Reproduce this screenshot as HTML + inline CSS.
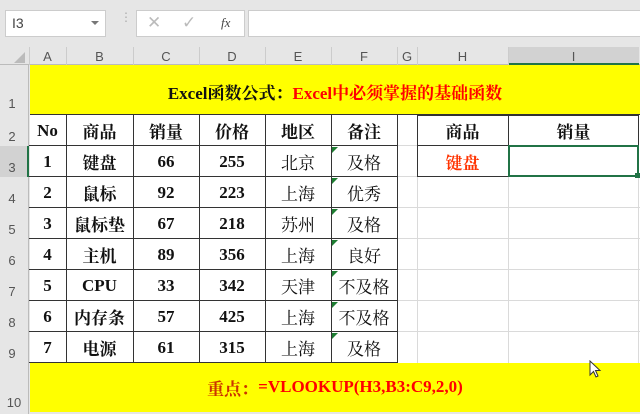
<!DOCTYPE html>
<html><head><meta charset="utf-8"><style>
*{margin:0;padding:0;box-sizing:border-box}
body{width:640px;height:414px;background:#e6e6e6;position:relative;overflow:hidden;font-family:"Liberation Serif","Noto Serif CJK SC",serif}
.a{position:absolute}
.hd{position:absolute;font-family:"Liberation Sans",sans-serif;font-size:13px;color:#555;text-align:center}
.c{position:absolute;display:flex;align-items:center;justify-content:center;font-size:17px;font-weight:bold;color:#111}
.n{font-weight:normal}
.tri{position:absolute;width:0;height:0;border-top:6px solid #1e7d32;border-right:6px solid transparent}
</style></head><body>
<!-- toolbar -->
<div class="a" style="left:0;top:0;width:640px;height:44px;background:#e6e6e6"></div>
<div class="a" style="left:5px;top:10px;width:101px;height:27px;background:#fff;border:1px solid #ccc"></div>
<div class="hd" style="left:12px;top:15px;font-size:14px;color:#444">I3</div>
<div class="a" style="left:91px;top:21px;border-left:4px solid transparent;border-right:4px solid transparent;border-top:4px solid #777"></div>
<div class="a" style="left:120px;top:15px;color:#aaa;font-size:12px;line-height:5px">⋮</div>
<div class="a" style="left:136px;top:10px;width:109px;height:27px;background:#fff;border:1px solid #ccc"></div>
<div class="a" style="left:147px;top:13px;color:#bbb;font-size:17px;font-family:'DejaVu Sans'">✕</div>
<div class="a" style="left:182px;top:13px;color:#bbb;font-size:17px;font-family:'DejaVu Sans'">✓</div>
<div class="a" style="left:221px;top:15px;color:#444;font-size:13px;font-style:italic">fx</div>
<div class="a" style="left:248px;top:10px;width:392px;height:27px;background:#fff;border-top:1px solid #ccc;border-bottom:1px solid #ccc;border-left:1px solid #ccc"></div>
<!-- column header -->
<div class="a" style="left:0;top:47px;width:640px;height:18px;background:#e6e6e6;border-bottom:1px solid #bbb"></div>
<div class="a" style="left:508px;top:47px;width:131px;height:18px;background:#d2d2d2;border-bottom:2px solid #217346"></div>
<div class="a" style="left:14px;top:52px;border-left:11px solid transparent;border-bottom:11px solid #bbb"></div>
<div class="a" style="left:0;top:65px;width:29px;height:349px;background:#e6e6e6;border-right:1px solid #bbb"></div>
<div class="a" style="left:0;top:146px;width:29px;height:31px;background:#d2d2d2;border-right:2px solid #217346"></div>
<!-- col letters -->
<div class="hd" style="left:29px;top:49px;width:37px">A</div>
<div class="hd" style="left:66px;top:49px;width:67px">B</div>
<div class="hd" style="left:133px;top:49px;width:66px">C</div>
<div class="hd" style="left:199px;top:49px;width:66px">D</div>
<div class="hd" style="left:265px;top:49px;width:66px">E</div>
<div class="hd" style="left:331px;top:49px;width:66px">F</div>
<div class="hd" style="left:397px;top:49px;width:20px">G</div>
<div class="hd" style="left:417px;top:49px;width:91px">H</div>
<div class="hd" style="left:508px;top:49px;width:131px">I</div>
<div class="a" style="left:29px;top:47px;width:1px;height:18px;background:#ccc"></div>
<div class="a" style="left:66px;top:47px;width:1px;height:18px;background:#ccc"></div>
<div class="a" style="left:133px;top:47px;width:1px;height:18px;background:#ccc"></div>
<div class="a" style="left:199px;top:47px;width:1px;height:18px;background:#ccc"></div>
<div class="a" style="left:265px;top:47px;width:1px;height:18px;background:#ccc"></div>
<div class="a" style="left:331px;top:47px;width:1px;height:18px;background:#ccc"></div>
<div class="a" style="left:397px;top:47px;width:1px;height:18px;background:#ccc"></div>
<div class="a" style="left:417px;top:47px;width:1px;height:18px;background:#ccc"></div>
<div class="a" style="left:508px;top:47px;width:1px;height:18px;background:#ccc"></div>
<!-- row numbers -->
<div class="hd" style="left:0;top:96px;width:24px">1</div>
<div class="hd" style="left:0;top:129px;width:24px">2</div>
<div class="hd" style="left:0;top:160px;width:24px">3</div>
<div class="hd" style="left:0;top:191px;width:24px">4</div>
<div class="hd" style="left:0;top:222px;width:24px">5</div>
<div class="hd" style="left:0;top:253px;width:24px">6</div>
<div class="hd" style="left:0;top:284px;width:24px">7</div>
<div class="hd" style="left:0;top:315px;width:24px">8</div>
<div class="hd" style="left:0;top:346px;width:24px">9</div>
<div class="hd" style="left:0;top:395px;width:28px">10</div>
<!-- grid area -->
<div class="a" style="left:30px;top:115px;width:610px;height:248px;background:#fff"></div>
<svg class="a" style="left:0;top:0" width="640" height="414">
<g stroke="#dadada" stroke-width="1">
<line x1="508.5" y1="115" x2="508.5" y2="363"/><line x1="638.5" y1="115" x2="638.5" y2="363"/><line x1="417.5" y1="115" x2="417.5" y2="363"/>
<line x1="397" y1="207.5" x2="640" y2="207.5"/><line x1="397" y1="238.5" x2="640" y2="238.5"/><line x1="397" y1="269.5" x2="640" y2="269.5"/><line x1="397" y1="300.5" x2="640" y2="300.5"/><line x1="397" y1="331.5" x2="640" y2="331.5"/><line x1="397" y1="176.5" x2="417" y2="176.5"/><line x1="397" y1="145.5" x2="417" y2="145.5"/>
</g>
<g stroke="#333" stroke-width="1">
<line x1="29" y1="145.5" x2="397" y2="145.5"/><line x1="29" y1="176.5" x2="397" y2="176.5"/><line x1="29" y1="207.5" x2="397" y2="207.5"/><line x1="29" y1="238.5" x2="397" y2="238.5"/><line x1="29" y1="269.5" x2="397" y2="269.5"/><line x1="29" y1="300.5" x2="397" y2="300.5"/><line x1="29" y1="331.5" x2="397" y2="331.5"/><line x1="29" y1="362.5" x2="397" y2="362.5"/>
<line x1="66.5" y1="115" x2="66.5" y2="363"/><line x1="133.5" y1="115" x2="133.5" y2="363"/><line x1="199.5" y1="115" x2="199.5" y2="363"/><line x1="265.5" y1="115" x2="265.5" y2="363"/><line x1="331.5" y1="115" x2="331.5" y2="363"/><line x1="397.5" y1="115" x2="397.5" y2="363"/>
<line x1="417.5" y1="115" x2="417.5" y2="177"/><line x1="508.5" y1="115" x2="508.5" y2="177"/><line x1="638.5" y1="115" x2="638.5" y2="177"/>
<line x1="417" y1="115.5" x2="639" y2="115.5"/><line x1="417" y1="145.5" x2="639" y2="145.5"/><line x1="417" y1="176.5" x2="639" y2="176.5"/>
</g>
<rect x="509" y="146" width="129" height="30" fill="none" stroke="#217346" stroke-width="2"/>
<rect x="635" y="173" width="5" height="5" fill="#217346"/>
</svg>
<!-- yellow rows -->
<div class="a" style="left:30px;top:65px;width:610px;height:50px;background:#ffff00;border-bottom:1px solid #333"></div>
<div class="a" style="left:30px;top:363px;width:610px;height:49px;background:#ffff00"></div>
<div class="c" style="left:30px;top:76px;width:610px;height:30px;font-size:17px">Excel函数公式：<span style="color:#f00">Excel中必须掌握的基础函数</span></div>
<div class="c" style="left:30px;top:372px;width:610px;height:30px;font-size:17px;color:#cc3300">重点：<span style="color:#f00">=VLOOKUP(H3,B3:C9,2,0)</span></div>
<!-- mouse -->
<svg class="a" style="left:589px;top:360px" width="14" height="20"><path d="M1 1 L1 15 L4.5 11.5 L7 17 L9 16 L6.5 10.5 L11 10.5 Z" fill="#fff" stroke="#333" stroke-width="1"/></svg>
<!-- header row -->
<div class="c" style="left:29px;top:115px;width:37px;height:31px">No</div>
<div class="c" style="left:66px;top:115px;width:67px;height:31px">商品</div>
<div class="c" style="left:133px;top:115px;width:66px;height:31px">销量</div>
<div class="c" style="left:199px;top:115px;width:66px;height:31px">价格</div>
<div class="c" style="left:265px;top:115px;width:66px;height:31px">地区</div>
<div class="c" style="left:331px;top:115px;width:66px;height:31px">备注</div>
<div class="c" style="left:417px;top:115px;width:91px;height:31px">商品</div>
<div class="c" style="left:508px;top:115px;width:131px;height:31px">销量</div>
<div class="c" style="left:417px;top:146px;width:91px;height:31px;color:#ff3300">键盘</div>
<!-- data -->
<div class="c" style="left:29px;top:146px;width:37px;height:31px">1</div><div class="c" style="left:66px;top:146px;width:67px;height:31px">键盘</div><div class="c" style="left:133px;top:146px;width:66px;height:31px">66</div><div class="c" style="left:199px;top:146px;width:66px;height:31px">255</div><div class="c n" style="left:265px;top:146px;width:66px;height:31px">北京</div><div class="c n" style="left:331px;top:146px;width:66px;height:31px">及格</div>
<div class="c" style="left:29px;top:177px;width:37px;height:31px">2</div><div class="c" style="left:66px;top:177px;width:67px;height:31px">鼠标</div><div class="c" style="left:133px;top:177px;width:66px;height:31px">92</div><div class="c" style="left:199px;top:177px;width:66px;height:31px">223</div><div class="c n" style="left:265px;top:177px;width:66px;height:31px">上海</div><div class="c n" style="left:331px;top:177px;width:66px;height:31px">优秀</div>
<div class="c" style="left:29px;top:208px;width:37px;height:31px">3</div><div class="c" style="left:66px;top:208px;width:67px;height:31px">鼠标垫</div><div class="c" style="left:133px;top:208px;width:66px;height:31px">67</div><div class="c" style="left:199px;top:208px;width:66px;height:31px">218</div><div class="c n" style="left:265px;top:208px;width:66px;height:31px">苏州</div><div class="c n" style="left:331px;top:208px;width:66px;height:31px">及格</div>
<div class="c" style="left:29px;top:239px;width:37px;height:31px">4</div><div class="c" style="left:66px;top:239px;width:67px;height:31px">主机</div><div class="c" style="left:133px;top:239px;width:66px;height:31px">89</div><div class="c" style="left:199px;top:239px;width:66px;height:31px">356</div><div class="c n" style="left:265px;top:239px;width:66px;height:31px">上海</div><div class="c n" style="left:331px;top:239px;width:66px;height:31px">良好</div>
<div class="c" style="left:29px;top:270px;width:37px;height:31px">5</div><div class="c" style="left:66px;top:270px;width:67px;height:31px">CPU</div><div class="c" style="left:133px;top:270px;width:66px;height:31px">33</div><div class="c" style="left:199px;top:270px;width:66px;height:31px">342</div><div class="c n" style="left:265px;top:270px;width:66px;height:31px">天津</div><div class="c n" style="left:331px;top:270px;width:66px;height:31px">不及格</div>
<div class="c" style="left:29px;top:301px;width:37px;height:31px">6</div><div class="c" style="left:66px;top:301px;width:67px;height:31px">内存条</div><div class="c" style="left:133px;top:301px;width:66px;height:31px">57</div><div class="c" style="left:199px;top:301px;width:66px;height:31px">425</div><div class="c n" style="left:265px;top:301px;width:66px;height:31px">上海</div><div class="c n" style="left:331px;top:301px;width:66px;height:31px">不及格</div>
<div class="c" style="left:29px;top:332px;width:37px;height:31px">7</div><div class="c" style="left:66px;top:332px;width:67px;height:31px">电源</div><div class="c" style="left:133px;top:332px;width:66px;height:31px">61</div><div class="c" style="left:199px;top:332px;width:66px;height:31px">315</div><div class="c n" style="left:265px;top:332px;width:66px;height:31px">上海</div><div class="c n" style="left:331px;top:332px;width:66px;height:31px">及格</div>
<div class="tri" style="left:332px;top:147px"></div><div class="tri" style="left:332px;top:178px"></div><div class="tri" style="left:332px;top:209px"></div><div class="tri" style="left:332px;top:240px"></div><div class="tri" style="left:332px;top:271px"></div><div class="tri" style="left:332px;top:302px"></div><div class="tri" style="left:332px;top:333px"></div>
</body></html>
